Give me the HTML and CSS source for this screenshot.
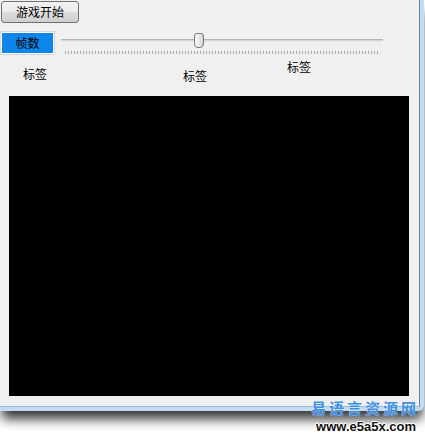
FILE: index.html
```html
<!DOCTYPE html>
<html lang="zh-CN">
<head>
    <meta charset="UTF-8">
    <meta name="viewport" content="width=device-width, initial-scale=1.0">
    <title>游戏窗口</title>
    <link rel="stylesheet" href="styles.css">
</head>
<body>
    <div class="window">
        <div class="frame">
            <div class="client">
                <button class="start-btn" type="button">游戏开始</button>

                <div class="speed-row">
                    <div class="speed-label">帧数</div>
                    <div class="slider">
                        <div class="track"></div>
                        <div class="thumb"></div>
                        <div class="ticks"></div>
                    </div>
                </div>

                <div class="label-row">
                    <span class="tag tag-1">标签</span>
                    <span class="tag tag-2">标签</span>
                    <span class="tag tag-3">标签</span>
                </div>

                <!-- game drawing area -->
                <div class="screen"></div>
            </div>
        </div>

        <div class="mark">
            <div class="mark-name">易语言资源网</div>
            <div class="mark-url">www.e5a5x.com</div>
        </div>
    </div>
</body>
</html>
```

FILE: styles.css
```css
/* Page */
body {
    margin: 0;
    padding: 0;
    background-color: #fff;
    font-family: "Noto Sans CJK SC", "Liberation Sans", sans-serif;
    font-size: 12px;
}

.window {
    position: relative;
    width: 425px;
    height: 436px;
    overflow: hidden;
    background-color: #fff;
}

/* Aero style frame round the form */
.frame {
    width: 420px;
    padding: 0 4px 4px 0;
    background-color: #c3dbf3;
    border-radius: 0 0 6px 0;
    box-shadow: 0 10px 12px -2px rgba(0, 0, 0, 0.8);
}

.client {
    width: 419px;
    height: 406px;
    background-color: #f0f0f0;
    border-right: 1px solid #6f7f90;
    border-bottom: 1px solid #9fb8d2;
    overflow: hidden;
}

/* Start button */
.start-btn {
    display: block;
    margin: 1px 0 0 1px;
    width: 78px;
    height: 22px;
    padding: 0;
    font-family: inherit;
    font-size: 12px;
    line-height: 18px;
    color: #000;
    border: 1px solid #707070;
    border-radius: 3px;
    background: linear-gradient(180deg, #f2f2f2 0%, #ebebeb 50%, #dddddd 51%, #cfcfcf 100%);
}

/* Frame rate label and slider */
.speed-row {
    display: flex;
    margin-top: 8px;
    height: 25px;
}

.speed-label {
    margin-left: 1px;
    width: 51px;
    height: 20px;
    line-height: 20px;
    text-align: center;
    color: #000;
    background-color: #0d86ec;
    border: 1px solid #fff;
    outline: 1px solid #d8d8d8;
    margin-top: 1px;
}

.slider {
    position: relative;
    margin-left: 7px;
    width: 322px;
}

.track {
    margin-top: 8px;
    width: 322px;
    height: 1px;
    border-top: 1px solid #b4b4b4;
    border-bottom: 1px solid #e6e6e6;
    background-color: #d6d6d6;
}

.thumb {
    position: absolute;
    left: 133px;
    top: 2px;
    width: 8px;
    height: 13px;
    border: 1px solid #7a7a7a;
    border-radius: 3px 3px 4px 4px;
    background: linear-gradient(90deg, #fbfbfb 0%, #e6e6e6 60%, #cfcfcf 100%);
}

.ticks {
    margin-top: 9px;
    margin-left: 4px;
    width: 315px;
    height: 3px;
    background: repeating-linear-gradient(90deg, #a9a9a9 0, #a9a9a9 1px, transparent 1px, transparent 3px);
}

/* Three free labels */
.label-row {
    display: flex;
    align-items: flex-start;
    height: 40px;
}

.tag {
    line-height: 14px;
    color: #000;
}

.tag-1 {
    margin-left: 23px;
    margin-top: 11px;
}

.tag-2 {
    margin-left: 136px;
    margin-top: 13px;
}

.tag-3 {
    margin-left: 80px;
    margin-top: 4px;
}

/* Black drawing area */
.screen {
    margin-left: 9px;
    width: 400px;
    height: 300px;
    background-color: #000;
}

/* Site mark in the corner */
.mark {
    position: absolute;
    right: 9px;
    bottom: 2px;
    text-align: right;
}

.mark-name {
    font-size: 15px;
    line-height: 22px;
    letter-spacing: 3px;
    margin-right: -3px;
    color: #3d8fe4;
    font-weight: bold;
    text-shadow: 0 0 1px #fff;
}

.mark-url {
    font-family: "Liberation Sans", sans-serif;
    font-size: 13px;
    font-weight: bold;
    line-height: 15px;
    color: #111;
    text-shadow: -1px 0 #fff, 1px 0 #fff, 0 -1px #fff, 0 1px #fff;
}
```
